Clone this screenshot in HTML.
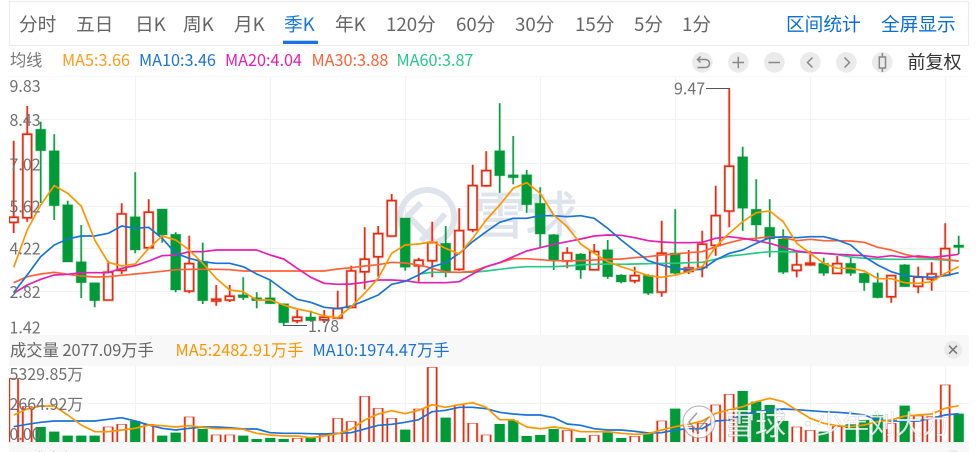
<!DOCTYPE html>
<html lang="zh"><head><meta charset="utf-8"><title>K</title>
<style>
html,body{margin:0;padding:0;background:#fff}
svg{display:block;font-family:"Noto Sans CJK SC","Liberation Sans",sans-serif}
.nav{font-size:18.7px;fill:#666}
.blue{fill:#0a6fd8}
.ma{font-size:16.2px}
.ax{font-size:16px;fill:#707070}
.ln{fill:none;stroke-width:1.7;vector-effect:non-scaling-stroke;stroke-linejoin:round}
.ic{fill:none;stroke:#888;stroke-width:1.5}
</style></head><body>
<svg width="980" height="452" viewBox="0 0 980 452" xmlns="http://www.w3.org/2000/svg">
<defs>
<clipPath id="c1"><rect x="9" y="76" width="960" height="259"/></clipPath>
<clipPath id="c2"><rect x="9" y="366" width="960" height="76"/></clipPath>
<path id="rw" d="M13.7 140.7V233M27.2 106V221.7M108.2 260.7V300.5M121.7 203.3V274M148.7 199.3V248M189.2 235.7V293.3M216.2 285V305.7M229.7 285V302M297.2 310V323.3M324.2 310V323M337.7 290.7V318.3M351.2 265.7V308.3M364.7 227.3V289.3M378.2 226V276.7M391.7 194V236.7M418.7 257.7V281.7M432.2 221.7V277.3M459.2 208.3V270.7M472.7 164.7V232.3M486.2 151.3V186.7M567.2 247.3V268.3M594.2 244V270M634.7 266.7V283.3M661.7 220.7V296.7M688.7 250V274M702.2 230.7V277.3M715.7 185.7V255.7M729.2 88V227.3M796.7 252.7V277.3M810.2 250.7V265.7M837.2 256V274M891.2 275.3V302.7M918.2 266.7V293.3M931.7 262.3V290.7M945.2 223.3V275"/>
<path id="rb" d="M9.4 217.3h8.6V222.3h-8.6zM22.9 134.3h8.6V217.7h-8.6zM103.9 272.3h8.6V300h-8.6zM117.4 214h8.6V270.3h-8.6zM144.4 212.3h8.6V247.7h-8.6zM184.9 263.7h8.6V291h-8.6zM211.9 299.3h8.6V301h-8.6zM225.4 296.3h8.6V300h-8.6zM292.9 317.3h8.6V320.7h-8.6zM319.9 317.3h8.6V319.7h-8.6zM333.4 308.7h8.6V318h-8.6zM346.9 271h8.6V307.3h-8.6zM360.4 259.3h8.6V271.7h-8.6zM373.9 233.7h8.6V256.7h-8.6zM387.4 200.7h8.6V236h-8.6zM414.4 260.3h8.6V265.7h-8.6zM427.9 242.7h8.6V260.7h-8.6zM454.9 230.7h8.6V269.3h-8.6zM468.4 185.7h8.6V229.7h-8.6zM481.9 170.7h8.6V185.7h-8.6zM562.9 253h8.6V261h-8.6zM589.9 251.7h8.6V269.7h-8.6zM630.4 275.7h8.6V280.7h-8.6zM657.4 253.3h8.6V292h-8.6zM684.4 268h8.6V271.3h-8.6zM697.9 244.3h8.6V267.3h-8.6zM711.4 215.7h8.6V245.3h-8.6zM724.9 166.3h8.6V211h-8.6zM792.4 265h8.6V270.3h-8.6zM805.9 263.3h8.6V264.7h-8.6zM832.9 263.7h8.6V273.3h-8.6zM886.9 275.7h8.6V296.7h-8.6zM913.9 277.3h8.6V286.3h-8.6zM927.4 274h8.6V279h-8.6zM940.9 248.7h8.6V275h-8.6z"/>
<path id="gw" d="M40.7 121.7V203M54.2 134.3V220M67.7 200.7V262M81.2 225V298M94.7 282.7V307.3M135.2 172.3V253.3M162.2 209V242.7M175.7 232.3V292.3M202.7 242.7V304M243.2 277.3V300M256.7 292.3V308.3M270.2 280V304M283.7 303.7V325M310.7 310.7V320.7M405.2 218V270.7M445.7 226V277.3M499.7 103.3V192.7M513.2 136V184.3M526.7 170V212.7M540.2 187.3V247.3M553.7 234V270M580.7 253.3V278.7M607.7 240V278.7M621.2 274.3V283.3M648.2 274.3V295M675.2 209.3V274M742.7 146.7V230.7M756.2 179.3V240M769.7 199.3V257.3M783.2 229.3V274M823.7 257.7V275.7M850.7 257.7V275.7M864.2 272.7V290.7M877.7 272.7V298.3M904.7 264.3V286.7M958.7 235.7V254"/>
<path id="gb" d="M35.7 129.3h10V150.7h-10zM49.2 150.7h10V205.7h-10zM62.7 204.7h10V262h-10zM76.2 261.7h10V282.7h-10zM89.7 282.7h10V300.7h-10zM130.2 216.7h10V250h-10zM157.2 209h10V235h-10zM170.7 234.3h10V290h-10zM197.7 261.3h10V300.7h-10zM238.2 294.7h10V297.7h-10zM251.7 297.7h10V300.7h-10zM265.2 297.7h10V303.7h-10zM278.7 303.7h10V322.7h-10zM305.7 317h10V320.7h-10zM400.2 218h10V267.3h-10zM440.7 243.3h10V272h-10zM494.7 150.7h10V175.7h-10zM508.2 174.7h10V177.7h-10zM521.7 174.7h10V204.7h-10zM535.2 203.3h10V234h-10zM548.7 234.7h10V260h-10zM575.7 254h10V270h-10zM602.7 249.7h10V276.7h-10zM616.2 275h10V282h-10zM643.2 275.3h10V293.3h-10zM670.2 253h10V273.3h-10zM737.7 156.7h10V208.3h-10zM751.2 209.3h10V225h-10zM764.7 227.3h10V239h-10zM778.2 239h10V272.3h-10zM818.7 263.3h10V273.3h-10zM845.7 263.3h10V273.3h-10zM859.2 273.3h10V282.7h-10zM872.7 282.7h10V297.7h-10zM899.7 264.7h10V286.7h-10zM953.7 245h10V247.5h-10z"/>
<path id="vr" d="M9.4 130h8.6V330h-8.6zM22.9 215h8.6V330h-8.6zM103.9 276h8.6V330h-8.6zM117.4 268h8.6V330h-8.6zM144.4 268h8.6V330h-8.6zM184.9 246h8.6V330h-8.6zM211.9 300h8.6V330h-8.6zM225.4 300h8.6V330h-8.6zM292.9 310h8.6V330h-8.6zM319.9 300h8.6V330h-8.6zM333.4 250h8.6V330h-8.6zM346.9 260h8.6V330h-8.6zM360.4 184h8.6V330h-8.6zM373.9 220h8.6V330h-8.6zM387.4 250h8.6V330h-8.6zM414.4 222h8.6V330h-8.6zM427.9 97h8.6V330h-8.6zM454.9 210h8.6V330h-8.6zM468.4 265h8.6V330h-8.6zM481.9 300h8.6V330h-8.6zM562.9 287h8.6V330h-8.6zM589.9 301h8.6V330h-8.6zM630.4 304h8.6V330h-8.6zM657.4 258h8.6V330h-8.6zM684.4 275h8.6V330h-8.6zM697.9 265h8.6V330h-8.6zM711.4 210h8.6V330h-8.6zM724.9 178h8.6V330h-8.6zM792.4 276h8.6V330h-8.6zM805.9 286h8.6V330h-8.6zM832.9 275h8.6V330h-8.6zM886.9 265h8.6V330h-8.6zM913.9 243h8.6V330h-8.6zM927.4 245h8.6V330h-8.6zM940.9 150h8.6V330h-8.6z"/>
<path id="vg" d="M35.7 276h10V330h-10zM49.2 290h10V330h-10zM62.7 302h10V330h-10zM76.2 302h10V330h-10zM89.7 302h10V330h-10zM130.2 258h10V330h-10zM157.2 302h10V330h-10zM170.7 293h10V330h-10zM197.7 282h10V330h-10zM238.2 302h10V330h-10zM251.7 312h10V330h-10zM265.2 309h10V330h-10zM278.7 312h10V330h-10zM305.7 308h10V330h-10zM400.2 284h10V330h-10zM440.7 248h10V330h-10zM494.7 267h10V330h-10zM508.2 257h10V330h-10zM521.7 303h10V330h-10zM535.2 300h10V330h-10zM548.7 282h10V330h-10zM575.7 309h10V330h-10zM602.7 293h10V330h-10zM616.2 309h10V330h-10zM643.2 296h10V330h-10zM670.2 221h10V330h-10zM737.7 168h10V330h-10zM751.2 200h10V330h-10zM764.7 210h10V330h-10zM778.2 258h10V330h-10zM818.7 290h10V330h-10zM845.7 268h10V330h-10zM859.2 255h10V330h-10zM872.7 240h10V330h-10zM899.7 212h10V330h-10zM953.7 236h10V330h-10z"/>
</defs>

<rect width="980" height="452" fill="#fff"/>
<rect x="9.5" y="1.5" width="959" height="44" fill="#fff" stroke="#ececec" stroke-width="1.2"/>
<g class="nav">
<text x="19" y="31">分时</text><text x="76" y="31">五日</text><text x="135" y="31">日K</text><text x="183" y="31">周K</text><text x="234" y="31">月K</text>
<text x="284" y="31" style="fill:#1a78e0">季K</text>
<text x="335" y="31">年K</text><text x="386" y="31">120分</text><text x="456" y="31">60分</text><text x="515" y="31">30分</text><text x="575" y="31">15分</text><text x="634" y="31">5分</text><text x="682" y="31">1分</text>
<text x="786" y="31" class="blue">区间统计</text><text x="881" y="31" class="blue">全屏显示</text>
</g>
<rect x="283" y="40.7" width="35" height="3.3" fill="#1a73e0"/>

<g class="ma">
<text x="10" y="66" fill="#777">均线</text>
<text x="62" y="66" fill="#ff9a1f">MA5:3.66</text>
<text x="139" y="66" fill="#1a73d9">MA10:3.46</text>
<text x="225" y="66" fill="#e61fb0">MA20:4.04</text>
<text x="311.5" y="66" fill="#ff6238">MA30:3.88</text>
<text x="396.5" y="66" fill="#28c888">MA60:3.87</text>
</g>
<g fill="#ebebeb"><circle cx="702.3" cy="62.3" r="10.3"/><circle cx="738.3" cy="62.3" r="10.3"/><circle cx="774.3" cy="62.3" r="10.3"/><circle cx="810.3" cy="62.3" r="10.3"/><circle cx="846.3" cy="62.3" r="10.3"/><circle cx="882.3" cy="62.3" r="10.3"/></g>
<g class="ic">
<path d="M697.5 59.5h8a4 4 0 0 1 0 8h-8M700.5 56.5l-3 3 3 3"/>
<path d="M732.5 62.5h11.5M738.3 56.8v11.5"/>
<path d="M768.5 62.5h11.5"/>
<path d="M812.5 57.5l-5 5 5 5"/>
<path d="M844.5 57.5l5 5-5 5"/>
<path d="M879.3 57h6.2v11h-6.2zM882.4 53v4M882.4 68v4"/>
</g>
<text x="907.5" y="68.5" font-size="18" fill="#333">前复权</text>

<rect x="9" y="76" width="960" height="1" fill="#f8f8f8"/>
<g stroke="#f2f2f2" stroke-width="1.2" fill="none">
<path d="M9 119.5H969M9 163.5H969M9 206.5H969M9 248.5H969M9 291.5H969"/>
<path d="M135.5 77V335M270.5 77V335M405.5 77V335M540.5 77V335M675.5 77V335M810.5 77V335M945.5 77V335"/>
</g>
<g fill="none" stroke="#dfe4ec" stroke-width="6">
<path d="M407 235a27 27 0 1 1 22 9"/>
<path d="M421 203l-13 13 26 26"/>
<path d="M445 214l-24 27"/>
</g>
<text x="475" y="234" font-size="51" fill="#dfe4ec" stroke="#dfe4ec" stroke-width=".9">雪球</text>

<g clip-path="url(#c1)">
<use href="#rw" fill="none" stroke="#e62a10" stroke-opacity=".3" stroke-width="2.8"/>
<use href="#gw" fill="none" stroke="#009a39" stroke-opacity=".3" stroke-width="2.6"/>
<use href="#rw" fill="none" stroke="#e62a10" stroke-width="1.4"/>
<use href="#gw" fill="none" stroke="#009a39" stroke-width="1.3"/>
<use href="#rb" fill="#fff" stroke="#e62a10" stroke-opacity=".3" stroke-width="3"/>
<use href="#rb" fill="#fff" stroke="#e62a10" stroke-width="1.6"/>
<use href="#gb" fill="#009a39" stroke="#009a39" stroke-opacity=".3" stroke-width="1.2"/>
<g transform="translate(0,90) scale(1,.33333)">
<polyline class="ln" stroke="#28c888" points="418.7,552 432.2,547 445.7,547 459.2,547 472.7,547 486.2,543 499.7,538 513.2,533 526.7,530 540.2,530 553.7,530 567.2,528 580.7,525 594.2,523 607.7,522 621.2,523 634.7,522 648.2,521 661.7,520 675.2,520 688.7,518 702.2,517 715.7,508 729.2,498 742.7,494 756.2,489 769.7,485 783.2,485 796.7,486 810.2,488 823.7,490 837.2,494 850.7,501 864.2,505 877.7,507 891.2,508 904.7,508 918.2,508 931.7,508 945.2,510 958.7,513"/>
<polyline class="ln" stroke="#ff6238" points="13.7,578 27.2,560 40.7,552 54.2,547 67.7,553 81.2,558 94.7,561 108.2,560 121.7,556 135.2,552 148.7,548 162.2,544 175.7,539 189.2,538 202.7,538 216.2,538 229.7,539 243.2,543 256.7,543 270.2,543 283.7,543 297.2,543 310.7,543 324.2,543 337.7,537 351.2,533 364.7,528 378.2,524 391.7,517 405.2,519 418.7,525 432.2,535 445.7,546 459.2,547 472.7,544 486.2,530 499.7,518 513.2,506 526.7,506 540.2,509 553.7,512 567.2,512 580.7,512 594.2,510 607.7,508 621.2,507 634.7,503 648.2,500 661.7,495 675.2,492 688.7,488 702.2,485 715.7,470 729.2,458 742.7,448 756.2,445 769.7,440 783.2,443 796.7,452 810.2,448 823.7,452 837.2,452 850.7,453 864.2,457 877.7,472 891.2,480 904.7,493 918.2,502 931.7,503 945.2,508 958.7,513"/>
<polyline class="ln" stroke="#e61fb0" points="13.7,610 27.2,585 40.7,568 54.2,555 67.7,553 81.2,548 94.7,548 108.2,548 121.7,535 135.2,527 148.7,513 162.2,497 175.7,495 189.2,485 202.7,485 216.2,480 229.7,480 243.2,480 256.7,480 270.2,495 283.7,507 297.2,535 310.7,562 324.2,580 337.7,583 351.2,582 364.7,577 378.2,570 391.7,570 405.2,572 418.7,578 432.2,578 445.7,578 459.2,575 472.7,552 486.2,530 499.7,518 513.2,500 526.7,483 540.2,473 553.7,463 567.2,455 580.7,447 594.2,438 607.7,435 621.2,436 634.7,443 648.2,452 661.7,456 675.2,458 688.7,458 702.2,457 715.7,445 729.2,440 742.7,445 756.2,452 769.7,460 783.2,472 796.7,483 810.2,488 823.7,490 837.2,493 850.7,495 864.2,497 877.7,502 891.2,497 904.7,502 918.2,498 931.7,502 945.2,498 958.7,493"/>
<polyline class="ln" stroke="#1a73d9" points="13.7,608 27.2,555 40.7,500 54.2,465 67.7,447 81.2,438 94.7,438 108.2,430 121.7,408 135.2,415 148.7,412 162.2,445 175.7,490 189.2,505 202.7,515 216.2,520 229.7,520 243.2,530 256.7,552 270.2,570 283.7,600 297.2,628 310.7,637 324.2,652 337.7,656 351.2,648 364.7,632 378.2,615 391.7,583 405.2,574 418.7,555 432.2,530 445.7,518 459.2,490 472.7,455 486.2,425 499.7,397 513.2,385 526.7,385 540.2,377 553.7,377 567.2,380 580.7,377 594.2,385 607.7,415 621.2,450 634.7,482 648.2,512 661.7,525 675.2,535 688.7,540 702.2,538 715.7,510 729.2,490 742.7,480 756.2,460 769.7,443 783.2,440 796.7,443 810.2,440 823.7,440 837.2,450 850.7,465 864.2,500 877.7,525 891.2,545 904.7,557 918.2,560 931.7,562 945.2,557 958.7,548"/>
<polyline class="ln" stroke="#ff9600" points="13.7,532 27.2,420 40.7,345 54.2,287 67.7,310 81.2,348 94.7,450 108.2,517 121.7,528 135.2,522 148.7,475 162.2,438 175.7,450 189.2,480 202.7,520 216.2,565 229.7,600 243.2,605 256.7,630 270.2,630 283.7,645 297.2,657 310.7,665 324.2,678 337.7,683 351.2,650 364.7,610 378.2,565 391.7,490 405.2,465 418.7,462 432.2,455 445.7,475 459.2,492 472.7,445 486.2,390 499.7,345 513.2,295 526.7,278 540.2,310 553.7,375 567.2,410 580.7,462 594.2,490 607.7,515 621.2,530 634.7,543 648.2,557 661.7,562 675.2,555 688.7,545 702.2,530 715.7,470 729.2,430 742.7,395 756.2,368 769.7,363 783.2,395 796.7,460 810.2,490 823.7,520 837.2,535 850.7,535 864.2,543 877.7,566 891.2,566 904.7,578 918.2,580 931.7,575 945.2,550 958.7,530"/>
</g>
</g>
<g class="ax">
<text x="9.5" y="92">9.83</text><text x="9.5" y="126">8.43</text><text x="9.5" y="170.5">7.02</text><text x="9.5" y="212.5">5.62</text><text x="9.5" y="254.5">4.22</text><text x="9.5" y="298">2.82</text><text x="9.5" y="333.5">1.42</text>
<text x="308" y="332">1.78</text><text x="674" y="94.5">9.47</text>
</g>
<path d="M283 325.5H307M706 88.5H730" stroke="#555" stroke-width="1" fill="none"/>

<rect x="9" y="335" width="960" height="31" fill="#f8f8f8"/>
<text x="10" y="356" font-size="16.3" fill="#666">成交量 2077.09万手</text>
<text x="175.5" y="356" font-size="16.3" fill="#ff9600">MA5:2482.91万手</text>
<text x="312.5" y="356" font-size="16.3" fill="#1a73d9">MA10:1974.47万手</text>
<circle cx="953" cy="349.7" r="9" fill="#ebebeb"/>
<path d="M949 345.7l8 8M957 345.7l-8 8" stroke="#777" stroke-width="1.5" fill="none"/>

<g stroke="#f2f2f2" stroke-width="1.2" fill="none">
<path d="M9 403.5H969"/>
<path d="M135.5 366V442M270.5 366V442M405.5 366V442M540.5 366V442M675.5 366V442M810.5 366V442M945.5 366V442"/>
</g>
<g clip-path="url(#c2)">
<g transform="translate(0,335) scale(1,.33333)">
<use href="#vr" fill="#fff" stroke="#e62a10" stroke-opacity=".3" stroke-width="3" style="vector-effect:non-scaling-stroke"/>
<use href="#vr" fill="#fff" stroke="#e62a10" stroke-width="1.6" style="vector-effect:non-scaling-stroke"/>
<use href="#vg" fill="#009a39" stroke="#009a39" stroke-opacity=".3" stroke-width="1.2" style="vector-effect:non-scaling-stroke"/>
<polyline class="ln" stroke="#1a73d9" points="13.7,275 27.2,268 40.7,262 54.2,258 67.7,258 81.2,258 94.7,258 108.2,253 121.7,248 135.2,258 148.7,270 162.2,280 175.7,285 189.2,280 202.7,276 216.2,276 229.7,278 243.2,282 256.7,282 270.2,293 283.7,295 297.2,295 310.7,296 324.2,297 337.7,295 351.2,293 364.7,282 378.2,271 391.7,268 405.2,262 418.7,254 432.2,230 445.7,226 459.2,217 472.7,217 486.2,221 499.7,232 513.2,237 526.7,240 540.2,240 553.7,248 567.2,267 580.7,271 594.2,281 607.7,285 621.2,285 634.7,289 648.2,294 661.7,293 675.2,285 688.7,281 702.2,281 715.7,258 729.2,255 742.7,240 756.2,230 769.7,225 783.2,222 796.7,224 810.2,227 823.7,230 837.2,232 850.7,235 864.2,240 877.7,255 891.2,258 904.7,258 918.2,258 931.7,250 945.2,240 958.7,236"/>
<polyline class="ln" stroke="#ff9600" points="13.7,240 27.2,222 40.7,213 54.2,213 67.7,240 81.2,270 94.7,290 108.2,290 121.7,285 135.2,280 148.7,270 162.2,272 175.7,276 189.2,272 202.7,277 216.2,281 229.7,281 243.2,283 256.7,295 270.2,300 283.7,303 297.2,303 310.7,308 324.2,303 337.7,296 351.2,283 364.7,255 378.2,237 391.7,227 405.2,236 418.7,226 432.2,209 445.7,217 459.2,209 472.7,203 486.2,217 499.7,254 513.2,254 526.7,276 540.2,281 553.7,276 567.2,281 580.7,290 594.2,290 607.7,290 621.2,295 634.7,298 648.2,296 661.7,285 675.2,275 688.7,268 702.2,258 715.7,235 729.2,225 742.7,215 756.2,200 769.7,190 783.2,200 796.7,225 810.2,250 823.7,265 837.2,272 850.7,275 864.2,270 877.7,260 891.2,255 904.7,243 918.2,240 931.7,237 945.2,220 958.7,212"/>
</g>
</g>
<g class="ax">
<text x="9.5" y="380">5329.85万</text><text x="9.5" y="410">2664.92万</text><text x="9.5" y="440">0.00</text>
</g>

<g opacity=".8">
<circle cx="699" cy="422" r="14" fill="none" stroke="#fff" stroke-width="4"/>
<circle cx="699" cy="422" r="16" fill="none" stroke="#999" stroke-width="1"/>
<path d="M697 413l-8 9 10 11M708 418l-10 12" fill="none" stroke="#888" stroke-width="1.5"/>
<text x="724" y="435" font-size="31" fill="#fff" stroke="#555" stroke-opacity=".6" stroke-width=".8" style="paint-order:stroke">雪球</text>
<text x="797" y="432" font-size="22" fill="#fff" stroke="#555" stroke-opacity=".6" stroke-width=".6" style="paint-order:stroke">·</text>
<text x="816" y="434" font-size="26.5" fill="#fff" stroke="#555" stroke-opacity=".6" stroke-width=".6" style="paint-order:stroke">少年刘大力</text>
</g>

<rect x="9" y="442" width="960" height="10" fill="#f8f8f8"/>
<path d="M9 442.5H969" stroke="#f0f0f0" stroke-width="1"/>
<text x="30" y="465" font-size="16" fill="#999">成交额 2077.09</text>
<text x="176" y="465" font-size="16" fill="#ff9600">MA5:2482.91</text>
<text x="312" y="465" font-size="16" fill="#1a73d9">MA10:1974.47</text>
<circle cx="953" cy="459" r="9" fill="#ebebeb"/>
</svg>
</body></html>
